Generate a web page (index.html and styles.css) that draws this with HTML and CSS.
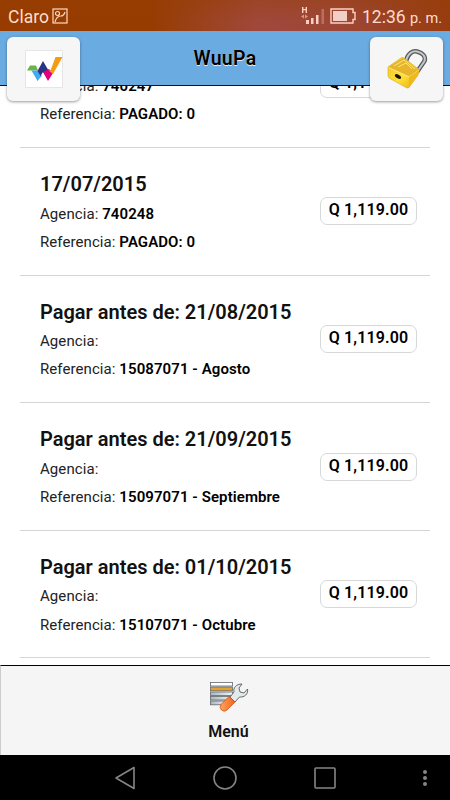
FILE: index.html
```html
<!DOCTYPE html>
<html lang="es">
<head>
  <meta charset="UTF-8">
  <meta name="viewport" content="width=device-width, initial-scale=1.0">
  <title>WuuPa</title>
  <link rel="stylesheet" href="styles.css">
</head>
<body>
  <div class="status">
    <span class="carrier">Claro</span>
    <svg class="picture" width="16" height="16" viewBox="0 0 16 16" fill="none" stroke="#ffd9c4" stroke-width="1.2">
      <rect x="1" y="1" width="14" height="14"/>
      <circle cx="5.5" cy="5.5" r="2"/>
      <path d="M3 14c1-4 3-6 6-6 2 0 3-1 4-4"/>
    </svg>
    <svg class="signal" width="24" height="20" viewBox="0 0 24 20" fill="#ffcfc0">
      <path d="M1 1h1.400v2h2.200V1H6v6H4.600V4.200H2.400V7H1z"/>
      <path d="M0 10.500l3-2v4zM4 8.500l3 2-3 2z" opacity=".6"/>
      <path d="M5 14h3v4H5zM10 12h2.500v6H10zM15 9h2.500v9H15z"/>
      <path d="M20.500 3H23v15h-2.500z" opacity=".3"/>
    </svg>
    <svg class="battery" width="26" height="16" viewBox="0 0 26 16">
      <path d="M1 1h22v3.500h2v7h-2V15H1z" fill="none" stroke="#ffcfc0" stroke-width="1.400"/>
      <path d="M3 3h14v10H3z" fill="#f2cfc6"/>
    </svg>
    <span class="clock">12:36 <small>p. m.</small></span>
  </div>

  <header class="header">
    <h1>WuuPa</h1>
    <a class="btn btn-left" href="#" aria-label="Inicio">
      <svg width="38" height="38" viewBox="0 0 38 38">
        <rect x=".5" y=".5" width="37" height="37" fill="#fff" stroke="#e6e6e6"/>
        <path d="M5 15.500h6l2 5H2z" fill="#6cb544"/>
        <path d="M6.500 20.500H13l2 4 2 1-4.500 5.500z" fill="#45aaf0"/>
        <path d="M18 11l7 12-3.500 4-3.500-5-2.500 4-3-5z" fill="#283583"/>
        <path d="M18 22l6-3 4 4-5 8z" fill="#e0007c"/>
        <path d="M23.500 20.500h2L30.500 7h7L28 24z" fill="#f59c12"/>
      </svg>
    </a>
    <a class="btn btn-right" href="#" aria-label="Cerrar sesión">
      <svg width="42" height="42" viewBox="0 0 42 42">
        <defs>
          <linearGradient id="gold" x1="0" x2="1" y1="0" y2="1">
            <stop offset="0" stop-color="#f0c22c"/>
            <stop offset=".55" stop-color="#ffdf35"/>
            <stop offset="1" stop-color="#e5a80e"/>
          </linearGradient>
        </defs>
        <path d="M20 13C22 5 27 2.500 31 3.500c6 1.500 9 5 7.500 9.500L31 24" fill="none" stroke="#54575c" stroke-width="4.500"/>
        <path d="M20 13C22 5 27 2.500 31 3.500c6 1.500 9 5 7.500 9.500L31 24" fill="none" stroke="#c3c6ca" stroke-width="2"/>
        <path d="M2 19L15 10q2-1 3 0l14.500 11q1 1 .5 3l-1 3-9 12.500q-1 1-3 0L3 30q-1-1-1-3z" fill="url(#gold)" stroke="#d8a821" stroke-width=".6"/>
        <path d="M2.500 19L17 10l15.500 12-9 6.500z" fill="#e6b52c"/>
        <path d="M8 18l10-6 11 9M12 19l8-4 6 6M2.500 19.500L23 29l9.500-6.500" fill="none" stroke="#ffe97c" stroke-width=".9"/>
        <path d="M23 29l9.500-6.500-.5 5L22.500 40z" fill="#efb81c"/>
        <ellipse cx="12" cy="28.500" rx="3.500" ry="1.800" transform="rotate(32 12 28.500)" fill="#17150c"/>
      </svg>
    </a>
  </header>

  <main class="content">
    <ul class="pagos">
      <li>
        <h2>17/06/2015</h2>
        <p>Agencia: <b>740247</b></p>
        <p>Referencia: <b>PAGADO: 0</b></p>
        <span class="monto">Q 1,119.00</span>
      </li>
      <li>
        <h2>17/07/2015</h2>
        <p>Agencia: <b>740248</b></p>
        <p>Referencia: <b>PAGADO: 0</b></p>
        <span class="monto">Q 1,119.00</span>
      </li>
      <li>
        <h2>Pagar antes de: 21/08/2015</h2>
        <p>Agencia:</p>
        <p>Referencia: <b>15087071 - Agosto</b></p>
        <span class="monto">Q 1,119.00</span>
      </li>
      <li>
        <h2>Pagar antes de: 21/09/2015</h2>
        <p>Agencia:</p>
        <p>Referencia: <b>15097071 - Septiembre</b></p>
        <span class="monto">Q 1,119.00</span>
      </li>
      <li>
        <h2>Pagar antes de: 01/10/2015</h2>
        <p>Agencia:</p>
        <p>Referencia: <b>15107071 - Octubre</b></p>
        <span class="monto">Q 1,119.00</span>
      </li>
    </ul>
  </main>

  <footer class="footer">
    <svg width="40" height="32" viewBox="0 0 40 32">
      <defs>
        <linearGradient id="steel" x1="0" x2="1">
          <stop offset="0" stop-color="#a9b7bf"/>
          <stop offset="1" stop-color="#f2f6f7"/>
        </linearGradient>
        <linearGradient id="handle" x1="0" x2="1">
          <stop offset="0" stop-color="#ffa35e"/>
          <stop offset="1" stop-color="#f2641c"/>
        </linearGradient>
      </defs>
      <g stroke="#62686b" stroke-width=".8">
        <rect x="1.500" y="1.500" width="22" height="3.500" fill="#fff"/>
        <rect x="1.500" y="6" width="22" height="3.800" fill="#e5a12e"/>
        <rect x="1.500" y="11" width="22" height="3.500" fill="url(#steel)"/>
        <rect x="1.500" y="15.500" width="22" height="3.500" fill="url(#steel)"/>
        <rect x="1.500" y="20" width="18" height="3.800" fill="url(#steel)"/>
      </g>
      <path d="M21 16l4-5c-1-4 2-8 8-8l-3 4 1 4 4 1 3.500-4c1 5-3 8.500-8 8l-4.500 5z" fill="#e6e9ea" stroke="#555b5e" stroke-width=".9"/>
      <path d="M20 15.500l6 5.500-8 8q-3 2.500-5.500 0t-.5-5.500z" fill="url(#handle)" stroke="#d6500e" stroke-width=".8"/>
    </svg>
    <span>Menú</span>
  </footer>

  <nav class="navbar">
    <svg width="22" height="24" viewBox="0 0 22 24"><path d="M20 1.500v21L2 12z"/></svg>
    <svg width="24" height="24" viewBox="0 0 24 24"><circle cx="12" cy="12" r="11"/></svg>
    <svg width="22" height="22" viewBox="0 0 22 22"><rect x="1" y="1" width="20" height="20" rx="1"/></svg>
    <svg class="dots" width="4" height="16" viewBox="0 0 4 16">
      <circle cx="2" cy="2" r="2"/><circle cx="2" cy="8" r="2"/><circle cx="2" cy="14" r="2"/>
    </svg>
  </nav>
</body>
</html>
```
FILE: styles.css
```css
* {
  box-sizing: border-box;
}
body {
  margin: 0;
  height: 800px;
  display: flex;
  flex-direction: column;
  overflow: hidden;
  background: #fff;
  color: #111;
  font-family: Roboto, "Liberation Sans", sans-serif;
}

/* barra de estado */
.status {
  flex: none;
  height: 31px;
  padding: 2px 8px 0;
  display: flex;
  align-items: center;
  background: linear-gradient(to bottom, rgba(150, 62, 0, 0.35), rgba(150, 62, 0, 0) 70%), linear-gradient(to right, #963c00, #963c00 33%, #a0483b 57%, #9d4738 75%, #983c10);
  color: #ffdccb;
}
.carrier {
  font-size: 17.5px;
}
.picture {
  margin-left: 3px;
  margin-top: -2px;
}
.signal {
  margin-left: auto;
  margin-top: -2px;
}
.battery {
  margin-left: 5px;
  margin-top: -1px;
}
.clock {
  width: 80px;
  margin-left: 6px;
  font-size: 17.5px;
  white-space: nowrap;
}
.clock small {
  font-size: 14.5px;
}

/* encabezado */
.header {
  flex: none;
  height: 55px;
  position: relative;
  z-index: 1;
  background: #6aabe2;
  border-bottom: 1px solid #06141f;
}
.header h1 {
  margin: 0;
  font-size: 19.5px;
  line-height: 55px;
  font-weight: 600;
  letter-spacing: 0.3px;
  text-align: center;
  color: #000;
  text-shadow: 0 1px 0 #eee;
}
.btn {
  position: absolute;
  top: 6px;
  width: 73px;
  height: 64px;
  display: flex;
  align-items: center;
  justify-content: center;
  background: #f6f6f6;
  border-radius: 6px;
  box-shadow: 0 1px 3px rgba(0, 0, 0, 0.4);
}
.btn-left {
  left: 7px;
}
.btn-right {
  right: 7px;
}

/* lista de pagos */
.content {
  flex: 1;
  min-height: 0;
  overflow: hidden;
  padding: 0 20px;
}
.pagos {
  list-style: none;
  margin: -65.5px 0 0;
  padding: 0;
}
.pagos li {
  height: 127.6px;
  padding: 21px 13px 0 20px;
  display: grid;
  grid-template-columns: 1fr auto;
  grid-template-rows: 30px 29px 27.5px;
  align-items: center;
  border-bottom: 1px solid #d5d5d5;
}
.pagos h2,
.pagos p {
  grid-column: 1;
  margin: 0;
  white-space: nowrap;
}
.pagos h2 {
  font-size: 20px;
  font-weight: 600;
}
.pagos p {
  font-size: 15px;
  letter-spacing: 0.08px;
  color: #222;
}
.pagos b {
  font-weight: 600;
  color: #000;
}
.monto {
  grid-column: 2;
  grid-row: 1 / 4;
  width: 97px;
  height: 28px;
  margin-bottom: 2px;
  border: 1px solid #d8d8d8;
  border-radius: 7px;
  font-size: 16px;
  line-height: 24px;
  font-weight: 600;
  letter-spacing: 0.15px;
  text-align: center;
  color: #000;
}

/* pie */
.footer {
  flex: none;
  height: 90px;
  padding: 15px 0 0 6px;
  display: flex;
  flex-direction: column;
  align-items: center;
  background: #f5f5f5;
  border-top: 1px solid #000;
  border-left: 1px solid #ccc;
}
.footer span {
  margin-top: 9px;
  font-size: 16px;
  line-height: 20px;
  font-weight: 600;
}

.navbar {
  flex: none;
  height: 45px;
  padding: 1px 23px 0 114px;
  display: flex;
  align-items: center;
  background: #000;
}
.navbar svg {
  fill: none;
  stroke: #858585;
  stroke-width: 1.6;
  stroke-linejoin: round;
}
.navbar svg + svg {
  margin-left: 77px;
}
.navbar .dots {
  fill: #858585;
  stroke: none;
}
.navbar svg + .dots {
  margin-left: auto;
}
```
